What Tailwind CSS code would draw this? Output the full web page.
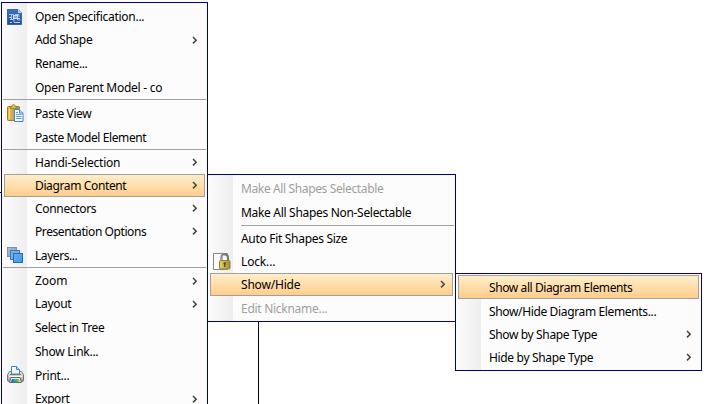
<!DOCTYPE html>
<html lang="en">
<head>
<meta charset="utf-8">
<title>Context menu</title>
<script src="https://cdn.jsdelivr.net/npm/@tailwindcss/browser@4"></script>
</head>
<body class="relative h-[404px] w-[726px] overflow-hidden bg-white text-[12px] leading-none text-black" style="font-family:'Noto Sans','Open Sans',sans-serif;font-size:12px">
<!-- diagram edges behind the menus -->
<div class="absolute left-0 top-[192px] h-px w-[2px] bg-black"></div>
<div class="absolute left-[258px] top-[320px] h-[84px] w-px bg-black"></div>

<nav class="absolute left-[1px] top-[2px] flex h-[420px] w-[207px] flex-col border border-[#000080] bg-[#fcfcfc] bg-linear-to-r from-[#fcfcfc] to-[#eeeeee] bg-[length:25px_100%] bg-no-repeat pt-[2px]" data-menu="main"></nav>
<nav class="absolute left-[207px] top-[174px] flex h-[148px] w-[249px] flex-col border border-[#000080] bg-[#fcfcfc] bg-linear-to-r from-[#fcfcfc] to-[#eeeeee] bg-[length:25px_100%] bg-no-repeat pt-[2px]" data-menu="content"></nav>
<nav class="absolute left-[455px] top-[273px] flex h-[98px] w-[247px] flex-col border border-[#000080] bg-[#fcfcfc] bg-linear-to-r from-[#fcfcfc] to-[#eeeeee] bg-[length:25px_100%] bg-no-repeat pt-[1px]" data-menu="show"></nav>

<template id="icon-spec"><svg width="16" height="17" viewBox="0 0 16 17"><defs><linearGradient id="sg" x1="0" y1="0" x2="0" y2="1"><stop stop-color="#3f73c4"/><stop offset="1" stop-color="#1e4796"/></linearGradient></defs><path d="M.5.5H11L14.500 4V15.500H.5Z" fill="url(#sg)" stroke="#3567b5"/><path d="M11 .5V4H14.500Z" fill="#b9d0ef"/><path d="M2 5.500H7M8 5.500H12V8M3 10.500H7V13.500H13M4.500 6V10M10.500 8V11H13.500" fill="none" stroke="#a9c6ee"/><rect x="6.500" y="6.500" width="4" height="3" fill="#7fa6dd" stroke="#c9dcf5"/><path d="M2 8.500H4M9 13.500H13M3 13.500H5M11 9.500H13" stroke="#c9dcf5"/></svg></template>
<template id="icon-paste"><svg width="17" height="18" viewBox="0 0 17 18"><defs><linearGradient id="pg" x1="0" x2="1"><stop stop-color="#e2c163"/><stop offset="1" stop-color="#b08a32"/></linearGradient></defs><rect x=".5" y="2.500" width="12" height="14" rx="1" fill="url(#pg)" stroke="#a07a2a"/><path d="M3.500 4.500V3H5V1.500Q6.500-.5 8 1.500V3H9.500V4.500Z" fill="#e4cb50" stroke="#a18722"/><path d="M2.500 5V15" stroke="#f7df87"/><path d="M7.500 5.500H12.500L16 9V17.500H7.500Z" fill="#f5faff" stroke="#3f83c8"/><path d="M12.500 5.500V9H16" fill="#cae2fb" stroke="#3f83c8"/><path d="M9 8.500H11M9 10.500H14.500M9 12.500H14.500M9 14.500H14.500" stroke="#5ba0e0"/></svg></template>
<template id="icon-layers"><svg width="17" height="16" viewBox="0 0 17 16"><defs><linearGradient id="lg" x1="0" y1="0" x2="1" y2="1"><stop stop-color="#6faee6"/><stop offset="1" stop-color="#3a97ed"/></linearGradient><linearGradient id="lh" x1="0" y1="0" x2="1" y2="1"><stop stop-color="#b5c0ce"/><stop offset="1" stop-color="#6794c3"/></linearGradient></defs><rect x=".5" y=".5" width="9" height="9" fill="url(#lh)" stroke="#7892b0"/><rect x="3.500" y="3.500" width="9" height="9" fill="#72b2ec" stroke="#4577ad"/><rect x="6.500" y="6.500" width="9" height="9" fill="url(#lg)" stroke="#2868b2"/></svg></template>
<template id="icon-print"><svg width="17" height="18" viewBox="0 0 17 18"><defs><linearGradient id="prg" x1="0" y1="0" x2="0" y2="1"><stop stop-color="#f2f2f2"/><stop offset="1" stop-color="#999"/></linearGradient><linearGradient id="rb" x1="0" x2="1"><stop stop-color="#1645c8"/><stop offset=".4" stop-color="#24a5cf"/><stop offset=".7" stop-color="#4fc325"/><stop offset="1" stop-color="#e2d71d"/></linearGradient></defs><path d="M2.500 5.500H14.500L16.500 9V14Q16.500 15.500 15 15.500H2Q.5 15.500 .5 14V9Z" fill="url(#prg)" stroke="#777"/><path d="M4.500 8V.5H9.500L12.500 3.500V8Z" fill="#f4faff" stroke="#3887d7"/><path d="M9.500 .5V3.500H12.500" fill="#b9dafa" stroke="#3887d7"/><path d="M3 8.500H14" stroke="#777"/><path d="M2 10.500H15" stroke="#fff"/><path d="M4 11.500H13L14.500 16.500H2.500Z" fill="#eef7ff" stroke="#666"/><path d="M5 13H12L13 16H4Z" fill="url(#rb)"/></svg></template>
<template id="icon-lock"><svg width="18" height="17" viewBox="0 0 18 17"><defs><linearGradient id="kg" x1="0" x2="1"><stop stop-color="#e6d860"/><stop offset="1" stop-color="#a08c34"/></linearGradient></defs><path d="M.5 .5H14.500V16.500H.5Z" fill="#fafafa" stroke="#858585"/><path d="M8.500 8V4.500Q8.500 1.500 11.700 1.500T15 4.500V8" fill="none" stroke="#777" stroke-width="2.200"/><path d="M9 7V4.500Q9 2 11.700 2" fill="none" stroke="#ccc" stroke-width=".8"/><rect x="6.500" y="7.500" width="10.500" height="8.500" rx="1" fill="url(#kg)" stroke="#8f7f3a"/><circle cx="11.700" cy="10.500" r="1.300" fill="#5c4d16"/><path d="M11.700 10V14" stroke="#5c4d16" stroke-width="1.300"/></svg></template>
<template id="arrow"><svg class="absolute top-[7px]" width="6" height="9" viewBox="0 0 6 9"><path d="M1 1L4.200 4.200L1 7.400" fill="none" stroke="#444" stroke-width="1.500"/></svg></template>

<script>
// Row: [label, height, label width, options]; null draws a separator
const menus = {
  main: [
    ["Open Specification...",24,109,{icon:"spec",iy:4}],["Add Shape",23,57,{sub:1,dy:-1}],["Rename...",24,52],["Open Parent Model - co",23,127],
    [null,3],["Paste View",24,56,{icon:"paste",iy:2}],["Paste Model Element",23,111],
    [null,2],["Handi-Selection",23,85,{sub:1}],["Diagram Content",23,91,{sub:1,on:1}],["Connectors",23,61,{sub:1}],["Presentation Options",23,111,{sub:1}],["Layers...",24,42,{icon:"layers",iy:4,dy:1}],
    [null,3],["Zoom",23,32,{sub:1,dy:-1}],["Layout",23,36,{sub:1,dy:-1}],["Select in Tree",24,69],["Show Link...",24,63],["Print...",24,34,{icon:"print",iy:2}],["Export",23,34,{sub:1,dy:-1}]
  ],
  content: [
    ["Make All Shapes Selectable",24,142,{off:1}],["Make All Shapes Non-Selectable",24,170],[null,2,0,{inset:1}],
    ["Auto Fit Shapes Size",23,106],["Lock...",23,34,{icon:"lock",iy:3}],["Show/Hide",23,59,{sub:1,on:1}],["Edit Nickname...",24,86,{off:1,dy:1}]
  ],
  show: [["Show all Diagram Elements",24,143,{on:1,dy:1}],["Show/Hide Diagram Elements...",24,167,{dy:1}],["Show by Shape Type",23,108,{sub:1}],["Hide by Shape Type",23,104,{sub:1}]]
};
const use = id => document.getElementById(id).content.firstElementChild.cloneNode(true);
const labels = [];
for (const [name, rows] of Object.entries(menus)) {
  const nav = document.querySelector(`[data-menu=${name}]`);
  for (const [label, h, w, o = {}] of rows) {
    const row = document.createElement("div");
    row.style.height = h + "px";
    if (label === null) {
      row.className = "shrink-0 pr-px " + (o.inset ? "pl-[33px]" : "pl-px");
      row.innerHTML = '<div class="h-px bg-[#a0a0a0]"></div>';
      nav.append(row); continue;
    }
    row.className = "relative mx-[2px] flex shrink-0 items-center whitespace-pre " +
      (o.on ? "border border-[#a0a0a0] bg-linear-to-b from-[#ffeecb] to-[#ffcd8a] pl-[30px] " : "pl-[31px] ") + (o.off ? "text-[#a0a0a0]" : "");
    const text = document.createElement("span");
    text.textContent = label;
    if (o.dy === 1) text.className = "pt-[2px]";
    if (o.dy === -1) text.className = "pb-[2px]";
    row.append(text);
    if (o.icon) {
      const icon = use("icon-" + o.icon);
      icon.classList.add("absolute", "left-[3px]");
      icon.style.top = o.iy + "px";
      row.append(icon);
    }
    if (o.sub) {
      const a = use("arrow");
      a.classList.add(o.on ? "right-[6px]" : "right-[7px]");
      if (o.on) a.classList.replace("top-[7px]", "top-[6px]");
      row.append(a);
    }
    nav.append(row);
    labels.push([text, w]);
  }
}
addEventListener("load", () => {
  for (const [text, w] of labels)
    text.style.letterSpacing = (w + 0.3 - text.getBoundingClientRect().width) / text.textContent.length + "px";
});
</script>
</body>
</html>
